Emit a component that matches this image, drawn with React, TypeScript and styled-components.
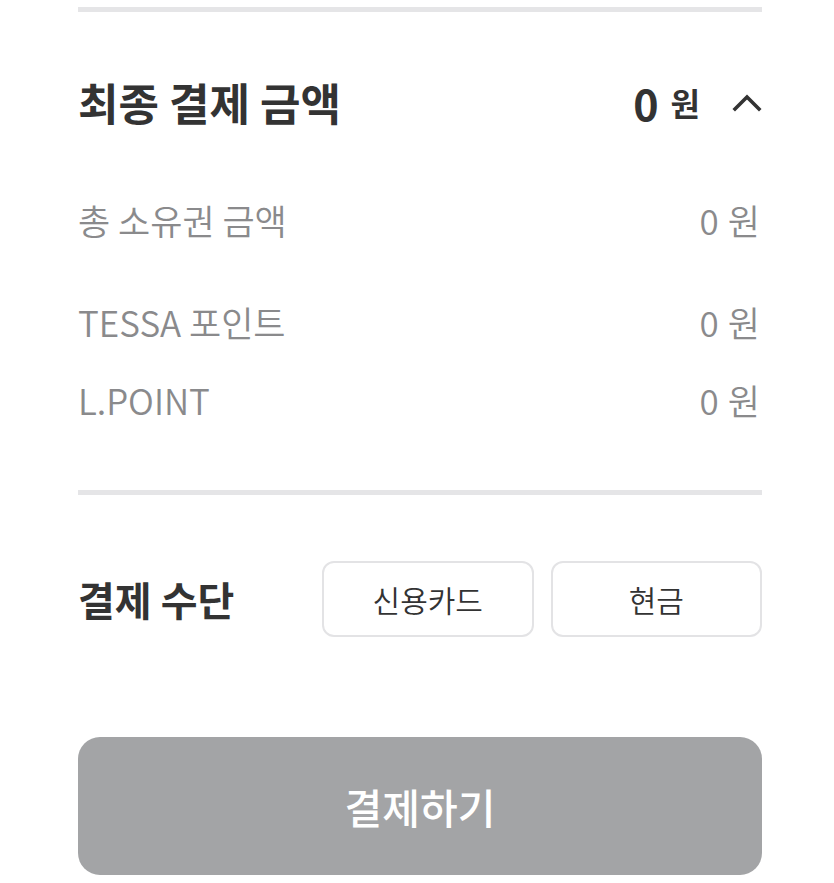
import React from "react";
import styled, { createGlobalStyle } from "styled-components";

const Global = createGlobalStyle`
  html, body { margin: 0; padding: 0; background: #ffffff; }
  body { font-family: "Noto Sans CJK KR", "Noto Sans", sans-serif; }
  * { box-sizing: border-box; }
`;

const Page = styled.div`
  padding: 7px 72px 8px 78px;
  display: flex;
  flex-direction: column;
`;

const Divider = styled.div<{ $top?: number }>`
  height: 5px;
  background: #e5e5e7;
  margin-top: ${(p) => p.$top ?? 0}px;
`;

const SummaryHeader = styled.div`
  margin-top: 58px;
  height: 64px;
  display: flex;
  align-items: center;
  justify-content: space-between;
`;

const Title = styled.h2<{ $size: number }>`
  margin: 0;
  font-size: ${(p) => p.$size}px;
  font-weight: 700;
  color: #333333;
  line-height: 1;
  letter-spacing: 0px;
`;

const TotalWrap = styled.div`
  display: flex;
  align-items: center;
  color: #333333;
`;

const TotalNum = styled.span`
  font-size: 43px;
  font-weight: 700;
  line-height: 1;
`;

const TotalUnit = styled.span`
  font-size: 32px;
  font-weight: 700;
  margin-left: 12px;
  line-height: 1;
`;

const Chevron = styled.svg`
  margin-left: 32px;
  width: 30px;
  height: 20px;
`;

const DetailRow = styled.div<{ $top: number }>`
  margin-top: ${(p) => p.$top}px;
  height: 48px;
  display: flex;
  align-items: center;
  justify-content: space-between;
  color: #8a8a8c;
  font-size: 35px;
  font-weight: 350;
  letter-spacing: 0px;
  padding-right: 2px;
`;

const Value = styled.span`
  display: flex;
  align-items: center;
  gap: 9px;
`;

const MethodRow = styled.div`
  margin-top: 66px;
  display: grid;
  grid-template-columns: 227px 1fr 1fr;
  column-gap: 17px;
  align-items: center;
`;

const MethodButton = styled.button`
  height: 76px;
  background: #ffffff;
  border: 2px solid #e3e3e5;
  border-radius: 12px;
  font-family: inherit;
  font-size: 30px;
  font-weight: 350;
  color: #333333;
  letter-spacing: 0px;
  cursor: pointer;
`;

const PayButton = styled.button`
  margin-top: 100px;
  height: 138px;
  width: 100%;
  border: none;
  border-radius: 22px;
  background: #a3a4a6;
  color: #ffffff;
  font-family: inherit;
  font-size: 41px;
  font-weight: 500;
  letter-spacing: 0px;
`;

const rows = [
  { label: "총 소유권 금액", top: 61 },
  { label: "TESSA 포인트", top: 54 },
  { label: "L.POINT", top: 30 },
];

export default function App() {
  return (
    <>
      <Global />
      <Page>
        <Divider />
        <SummaryHeader>
          <Title $size={44}>최종 결제 금액</Title>
          <TotalWrap>
            <TotalNum>0</TotalNum>
            <TotalUnit>원</TotalUnit>
            <Chevron viewBox="0 0 30 20" fill="none">
              <path d="M3 17 L15 5 L27 17" stroke="#333" strokeWidth="3.6" strokeLinecap="square" />
            </Chevron>
          </TotalWrap>
        </SummaryHeader>
        {rows.map((r) => (
          <DetailRow key={r.label} $top={r.top}>
            <span>{r.label}</span>
            <Value>
              <span>0</span>
              <span>원</span>
            </Value>
          </DetailRow>
        ))}
        <Divider $top={67} />
        <MethodRow>
          <Title $size={40}>결제 수단</Title>
          <MethodButton>신용카드</MethodButton>
          <MethodButton>현금</MethodButton>
        </MethodRow>
        <PayButton>결제하기</PayButton>
      </Page>
    </>
  );
}
